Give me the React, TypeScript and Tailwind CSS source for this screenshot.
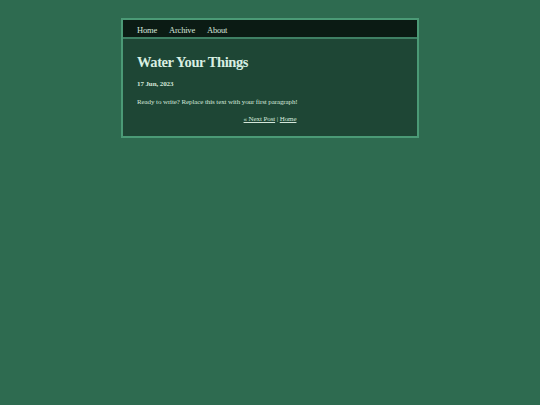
export default function App() {
  return (
    <div
      className="min-h-[405px] w-full bg-[#2e6b50] pt-[18px]"
      style={{ fontFamily: "'Liberation Serif', 'Times New Roman', serif" }}
    >
      <div className="mx-auto w-[298px] border-2 border-[#4b9a76] bg-[#1e4635]">
        <nav className="flex h-[19px] items-center gap-[12px] border-b-2 border-[#3f8064] bg-[#0b1b14] px-[14px] pt-[3px] text-[8.5px] leading-none tracking-[-0.2px] text-[#d6e6dc]">
          <a>Home</a>
          <a>Archive</a>
          <a>About</a>
        </nav>
        <div className="px-[14px] pb-[12px] pt-[13px] text-[#d4e6da]">
          <h1 className="text-[14.5px] font-bold leading-[20px] tracking-[-0.4px] text-[#d9efe2]">Water Your Things</h1>
          <div className="mt-[7px] text-[7px] font-bold leading-[10px] tracking-[-0.1px]">17 Jun, 2023</div>
          <p className="mt-[8px] text-[7px] leading-[10px] tracking-[-0.1px]">
            Ready to write? Replace this text with your first paragraph!
          </p>
          <div className="mt-[7px] text-center text-[7px] leading-[10px] tracking-[-0.1px]">
            <a className="underline">« Next Post</a> | <a className="underline">Home</a>
          </div>
        </div>
      </div>
    </div>
  );
}
